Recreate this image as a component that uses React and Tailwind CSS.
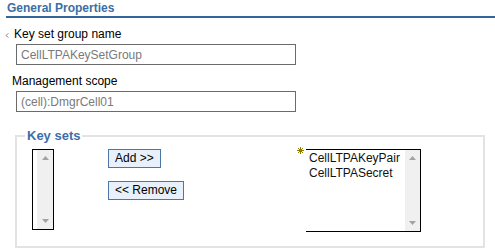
import React from 'react';

const UpArrow = () => (
  <svg width="7" height="4" viewBox="0 0 7 4" className="block">
    <path d="M0 4 L3.5 0 L7 4 Z" fill="#a3a3a3" />
  </svg>
);

const DownArrow = () => (
  <svg width="7" height="4" viewBox="0 0 7 4" className="block">
    <path d="M0 0 L7 0 L3.5 4 Z" fill="#a3a3a3" />
  </svg>
);

const Scrollbar = ({ width }) => (
  <div className={`${width} h-full bg-[#f0f0f0] flex flex-col items-center justify-between py-[6px]`}>
    <UpArrow />
    <DownArrow />
  </div>
);

const App = () => {
  return (
    <div className="w-[495px] h-[251px] bg-white font-['Liberation_Sans',Arial,sans-serif] text-[12px] text-black overflow-hidden">
      <div className="ml-[6px] border-b-2 border-[#336699]">
        <h2 className="pl-px font-bold leading-[16px] text-[12px] text-[#3b6ea5]">General Properties</h2>
      </div>

      <div className="mt-[9px] flex items-center pl-[5px] leading-[14px]">
        <svg width="4" height="5" viewBox="0 0 4 5" className="block mt-[3px]">
          <path d="M3.5 0.5 L0.8 2.5 L3.5 4.5" stroke="#8a8a7a" strokeWidth="0.9" fill="none" />
        </svg>
        <span className="ml-[5px]">Key set group name</span>
      </div>
      <div className="mt-[3px] ml-[16px] w-[280px] h-[21px] border border-[#6b6b6b] flex items-center pl-[4px] text-[#7a7a7a] leading-[14px]">
        CellLTPAKeySetGroup
      </div>

      <div className="mt-[9px] pl-[12px] leading-[14px]">Management scope</div>
      <div className="mt-[3px] ml-[16px] w-[280px] h-[21px] border border-[#6b6b6b] flex items-center pl-[4px] text-[#7a7a7a] leading-[14px]">
        (cell):DmgrCell01
      </div>

      <fieldset className="mt-[16px] ml-[15px] w-[470px] h-[120px] border-2 border-[#e3e3e3]">
        <legend className="ml-[8px] px-[2px] font-bold text-[13px] leading-[15px] text-[#3c6eaa]">Key sets</legend>
        <div className="mt-[6px] pl-[15px] flex items-start">
          <div className="w-[22px] h-[81px] border border-black bg-white flex justify-end">
            <Scrollbar width="w-[16px]" />
          </div>

          <div className="ml-[54px] w-[77px] flex flex-col items-start gap-[13px]">
            <button className="h-[19px] px-[6px] border border-[#4a76a8] bg-[#e8f0fb] leading-[15px] text-[12px] text-black">
              Add &gt;&gt;
            </button>
            <button className="h-[19px] px-[6px] border border-[#4a76a8] bg-[#e8f0fb] leading-[15px] text-[12px] text-black">
              &lt;&lt; Remove
            </button>
          </div>

          <div className="ml-[112px] w-[9px] pt-[-1px]">
            <svg width="7" height="7" viewBox="0 0 7 7" className="block -mt-[2px]">
              <g stroke="#8c7a00" strokeWidth="1">
                <path d="M3.5 0 V7" />
                <path d="M0 3.5 H7" />
                <path d="M1 1 L6 6" />
                <path d="M6 1 L1 6" />
              </g>
            </svg>
          </div>

          <div className="w-[115px] h-[83px] border-t border-r border-b border-black bg-white flex">
            <div className="flex-1 pl-[3px] pt-px leading-[15px] text-[#111]">
              <div>CellLTPAKeyPair</div>
              <div>CellLTPASecret</div>
            </div>
            <Scrollbar width="w-[15px]" />
          </div>
        </div>
      </fieldset>
    </div>
  );
};

export default App;
